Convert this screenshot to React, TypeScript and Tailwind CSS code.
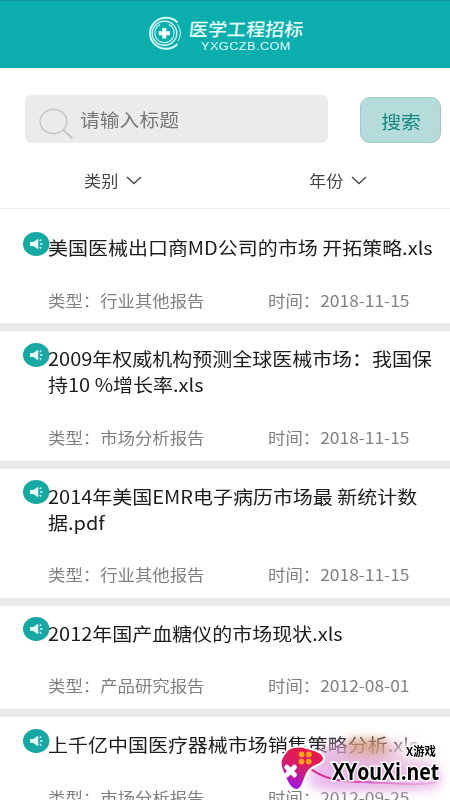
import React from "react";

type Report = { lines: string[]; type: string; date: string };

const reports: Report[] = [
  { lines: ["美国医械出口商MD公司的市场 开拓策略.xls"], type: "行业其他报告", date: "2018-11-15" },
  { lines: ["2009年权威机构预测全球医械市场：我国保", "持10 %增长率.xls"], type: "市场分析报告", date: "2018-11-15" },
  { lines: ["2014年美国EMR电子病历市场最 新统计数", "据.pdf"], type: "行业其他报告", date: "2018-11-15" },
  { lines: ["2012年国产血糖仪的市场现状.xls"], type: "产品研究报告", date: "2012-08-01" },
  { lines: ["上千亿中国医疗器械市场销售策略分析.xls"], type: "市场分析报告", date: "2012-09-25" },
];

function Emblem() {
  return (
    <svg className="h-[34px] w-[34px]" viewBox="0 0 34 34" fill="none" stroke="#d5fbf8">
      <path d="M30.5 6.5A16 15.5 0 1 0 30.5 28" strokeWidth="2" />
      <path d="M30.5 8.5A15 15 0 0 1 31 25" strokeWidth="1" />
      <ellipse cx="17.5" cy="17.2" rx="12.3" ry="12" strokeWidth="1.4" />
      <path d="M13 8.6A9.6 9.6 0 1 0 22 8.6" strokeWidth="1.1" />
      <path d="M17.3 12V22.6M11.8 17.3H22.8" stroke="#fff" strokeWidth="4" />
    </svg>
  );
}

function Speaker() {
  return (
    <svg className="h-6 w-[27px] shrink-0" viewBox="0 0 27 24">
      <ellipse cx="13.2" cy="12" rx="13.2" ry="11.9" fill="#17a8a4" />
      <path d="M7 10h3.2l5-3.2v10.4l-5-3.2H7z" fill="#e6fffd" />
      <path d="M16.6 8.9l1.8-1.5M17 12h2.6M16.6 15.1l1.8 1.5" stroke="#c7f7f4" strokeWidth="1.3" />
    </svg>
  );
}

function Chevron() {
  return (
    <svg className="h-[9px] w-4" viewBox="0 0 16 9" fill="none" stroke="#444" strokeWidth="1.3">
      <path d="M1 1l7 6.5L15 1" />
    </svg>
  );
}

function ReportItem({ report }: { report: Report }) {
  return (
    <article className="border-b-[8px] border-[#ebebeb] pt-[14px] pb-[11.8px]">
      <div className="flex pl-[23px]">
        <div className="-mt-[2.5px] h-6 w-[25px]"><Speaker /></div>
        <h2 className="origin-left scale-x-[1.11] text-[18px] leading-[26px] text-[#1c1c1c]">
          {report.lines.map((line) => (
            <span key={line} className="block whitespace-nowrap">{line}</span>
          ))}
        </h2>
      </div>
      <div className="mt-[27.5px] flex pl-12 text-[15.6px] leading-6 text-[#808080]">
        <div className="w-[220px] shrink-0">
          <span className="block w-max origin-left scale-x-[1.115]">类型：{report.type}</span>
        </div>
        <span className="block w-max origin-left scale-x-[1.115] whitespace-nowrap">时间：{report.date}</span>
      </div>
    </article>
  );
}

function Watermark() {
  return (
    <div className="absolute top-[736px] left-[278px] h-16 w-[172px]">
      <div className="absolute top-2 left-9 h-11 w-[122px] rounded-full bg-linear-to-r from-[#dba5df]/75 via-[#e0aacb]/80 to-[#f8e4f5]/90 blur-[6px]" />
      <div className="absolute top-[2px] left-[68px] h-4 w-[42px] rounded-full bg-[#d49a70]/65 blur-[5px]" />
      <div className="absolute top-[3px] left-[122px] h-5 w-[44px] rounded-full bg-white/75 blur-[5px]" />
      <div className="absolute top-[30px] left-[30px] h-6 w-[134px] rounded-full bg-[#e9b7ee]/75 blur-[5px]" />
      <svg className="absolute inset-0 h-16 w-[172px]" viewBox="0 0 172 64" fill="none">
        <defs>
          <linearGradient id="pad" x1="35" y1="8" x2="16" y2="54" gradientUnits="userSpaceOnUse">
            <stop stopColor="#ed183c" />
            <stop offset=".5" stopColor="#d91d66" />
            <stop offset="1" stopColor="#9a16f0" />
          </linearGradient>
          <linearGradient id="cord" x1="28" y1="0" x2="165" y2="0" gradientUnits="userSpaceOnUse">
            <stop stopColor="#d91d78" />
            <stop offset=".4" stopColor="#d94ebd" />
            <stop offset="1" stopColor="#eda5d6" stopOpacity=".5" />
          </linearGradient>
        </defs>
        <path d="M29 30C44 43 62 46 86 46C123 47 157 52 163 42" stroke="url(#cord)" strokeWidth="1.8" />
        <path d="M7 17C10 11 20 9 29 12C36 14 46 16 46 23C45 30 35 28 30 36C26 42 25 54 19 54C11 54 8 43 4 34C1 26 3 22 7 17Z" fill="url(#pad)" stroke="#fff" strokeWidth="2" />
        <g fill="#ffa018">
          <circle cx="23.6" cy="18.5" r="2.9" /><circle cx="30.8" cy="18.5" r="2.9" />
          <circle cx="23.6" cy="25.6" r="2.9" /><circle cx="30.8" cy="25.6" r="2.9" />
        </g>
        <path d="M8.8 31.2l7.6 7.6M16.4 31.2l-7.6 7.6" stroke="#fff" strokeWidth="5" strokeLinecap="round" />
      </svg>
      <span className="absolute top-[7px] left-[128px] origin-left scale-x-95 whitespace-nowrap text-[12px] leading-4 font-bold text-black [paint-order:stroke_fill] [-webkit-text-stroke:2px_white]">X游戏</span>
      <span className="absolute top-[22px] left-[53.5px] origin-left scale-x-[0.865] whitespace-nowrap font-['Open_Sans','Noto_Sans',sans-serif] text-[22.5px] leading-7 font-bold text-black [paint-order:stroke_fill] [-webkit-text-stroke:3px_white]">XYouXi.net</span>
    </div>
  );
}

export default function App() {
  return (
    <div className="relative h-[800px] w-[450px] overflow-hidden bg-white font-['Noto_Sans_CJK_SC',sans-serif]">
      <header className="flex h-[67.5px] justify-center border-t border-[#0b9693] bg-[#0caead] pt-[15px]">
        <div className="flex w-[156px] gap-[8px]">
          <Emblem />
          <div className="w-[114px] text-[#e4fffc]">
            <div className="origin-left scale-x-[1.06] -skew-x-6 whitespace-nowrap text-[18px] leading-[25px] font-medium">医学工程招标</div>
            <div className="ml-[12px] w-max origin-left scale-x-[1.28] font-['Liberation_Sans',sans-serif] text-[10px] leading-[11px] tracking-[0.3px]">YXGCZB.COM</div>
          </div>
        </div>
      </header>

      <div className="mt-[27.5px] flex h-12 items-end gap-8 pl-[25px]">
        <div className="flex h-12 w-[303px] items-center rounded-[6px] bg-[#ebebeb] pl-[14px]">
          <svg className="mt-[9px] h-[32px] w-[35px]" viewBox="0 0 35 32" fill="none" stroke="#c4c4c4" strokeWidth="1.4">
            <ellipse cx="14.5" cy="13.5" rx="13.4" ry="12" />
            <path d="M24 22l9.5 8.5" strokeWidth="1.8" />
          </svg>
          <span className="ml-[5.5px] w-max origin-left scale-x-[1.1] text-[18px] leading-[26px] text-[#777]">请输入标题</span>
        </div>
        <button className="flex h-[46px] w-[81px] items-center justify-center rounded-[10px] border border-[#9fc5c4] bg-[#b5dcdb] pt-[2px] text-[18px] text-[#178783]">
          <span className="scale-x-[1.1]">搜索</span>
        </button>
      </div>

      <nav className="flex h-[66px] items-center border-b border-[#eee] pt-[10px] pl-[84px] text-[15.6px] text-[#444]">
        <div className="flex w-[225px] items-center">
          <span className="mr-[11px] origin-left scale-x-[1.1]">类别</span><Chevron />
        </div>
        <div className="flex items-center">
          <span className="mr-[11px] origin-left scale-x-[1.1]">年份</span><Chevron />
        </div>
      </nav>

      <main className="pt-[11px]">
        {reports.map((report) => <ReportItem key={report.lines[0]} report={report} />)}
      </main>
      <Watermark />
    </div>
  );
}
